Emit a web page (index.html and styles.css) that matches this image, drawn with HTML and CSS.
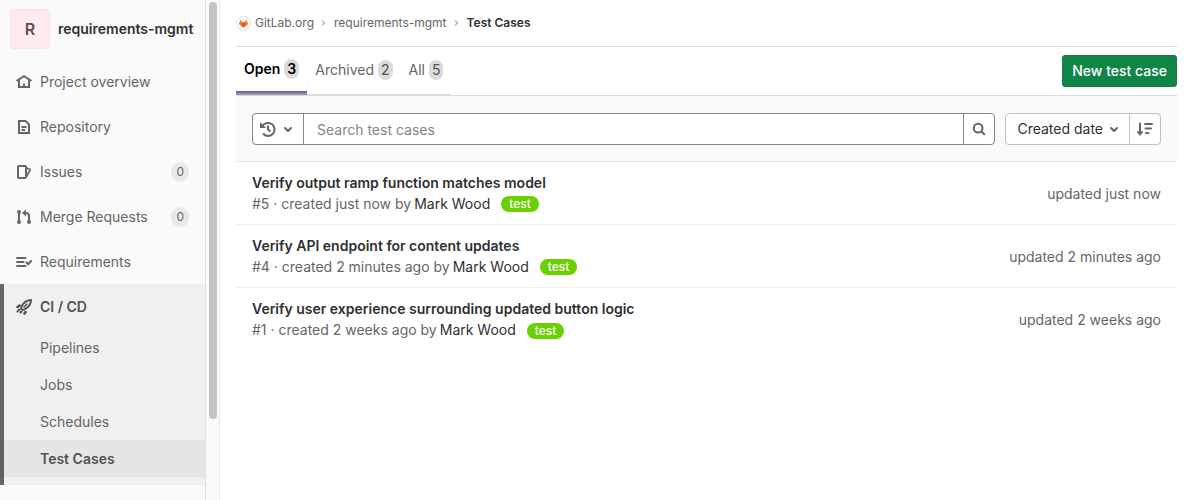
FILE: index.html
```html
<!DOCTYPE html>
<html lang="en">
<head>
<meta charset="utf-8">
<title>Test Cases · requirements-mgmt</title>
<link rel="stylesheet" href="styles.css">
</head>
<body>
<div class="page">
  <aside class="sidebar">
    <nav class="nav" aria-label="Project">
      <a class="project" href="#"><span class="avatar">R</span><span>requirements-mgmt</span></a>
      <a class="nav-item" href="#">
        <svg class="icon" viewBox="0 0 16 16" fill="none" stroke="currentColor" stroke-width="2"><path d="M.5 7 8 2.200l7.500 4.800M3 6V13h10V6M8 13V9.500"/></svg>
        <span>Project overview</span></a>
      <a class="nav-item" href="#">
        <svg class="icon" viewBox="0 0 16 16" fill="none" stroke="currentColor" stroke-width="2"><path d="M3 2h6.500L13 5.500V14H3zM5.500 8h5M5.500 11h3.500"/></svg>
        <span>Repository</span></a>
      <a class="nav-item" href="#">
        <svg class="icon" viewBox="0 0 16 16" fill="none" stroke="currentColor" stroke-width="2" stroke-linejoin="round"><rect x="2" y="2" width="8" height="12" rx="1"/><path stroke-width="1.800" d="M10.500 4l3.300 1.300c.3.200.3.500.2.800L10.500 12.500"/></svg>
        <span>Issues</span><span class="count">0</span></a>
      <a class="nav-item" href="#">
        <svg class="icon" viewBox="0 0 16 16" fill="none" stroke="currentColor" stroke-width="2"><path d="M3 3v10M13 13V7c0-2-1-3-3.500-3"/><g fill="currentColor" stroke="none"><circle cx="3" cy="3" r="2"/><circle cx="3" cy="13" r="2"/><circle cx="13" cy="13" r="2"/><path d="M6 4 10 .5v7z"/></g></svg>
        <span>Merge Requests</span><span class="count">0</span></a>
      <a class="nav-item" href="#">
        <svg class="icon" viewBox="0 0 16 16" fill="none" stroke="currentColor" stroke-width="2" stroke-linecap="round"><path d="M1 4h8.500M1 8h6.500M1 12h8.500"/><path d="M10.500 8.500l1.700 1.700L15 7"/></svg>
        <span>Requirements</span></a>
      <div class="section">
        <a class="nav-item strong" href="#">
          <svg class="icon" viewBox="0 0 16 16" fill="none" stroke="currentColor" stroke-width="2" stroke-linejoin="round" stroke-linecap="round"><path d="M15 1c-4 0-7 2-9.500 6.500-.6 1.200-.5 2.200.1 2.800s1.700.6 2.900 0C13 8 15 5 15 1z"/><path d="M11 5 8 8" stroke-width="1.400"/><path stroke-width="2.600" d="M3.500 6.500 1.500 8M9.500 13l-1 1.500"/><path stroke-width="2" d="M3.500 10.500 1.500 12.500M5.500 12.500l-1 1"/></svg>
          <span>CI / CD</span></a>
        <a class="sub-item" href="#">Pipelines</a>
        <a class="sub-item" href="#">Jobs</a>
        <a class="sub-item" href="#">Schedules</a>
        <a class="sub-item current" href="#" aria-current="page">Test Cases</a>
      </div>
    </nav>
    <div class="track"><div class="thumb"></div></div>
  </aside>
  <main class="main">
    <nav class="crumbs" aria-label="Breadcrumb">
      <a class="group" href="#"><span class="logo"><svg width="9" height="9" viewBox="0 0 24 24"><path fill="#fc6d26" d="M12 23 .8 14.500 0 12 4.500 1l3.300 8.500h8.400L19.500 1 24 12l-.8 2.500z"/><path fill="#e24329" d="M12 23 7.800 9.500h8.400z"/></svg></span>GitLab.org</a>
      <svg class="sep" viewBox="0 0 8 8" fill="none" stroke="currentColor"><path d="M2 1.500 4.500 4 2 6.500"/></svg>
      <a href="#">requirements-mgmt</a>
      <svg class="sep" viewBox="0 0 8 8" fill="none" stroke="currentColor"><path d="M2 1.500 4.500 4 2 6.500"/></svg>
      <a class="here" href="#">Test Cases</a>
    </nav>
    <div class="top">
      <div class="tabs" role="tablist">
        <button class="tab active" role="tab" aria-selected="true">Open <span class="badge">3</span></button>
        <button class="tab" role="tab" aria-selected="false">Archived <span class="badge">2</span></button>
        <button class="tab" role="tab" aria-selected="false">All <span class="badge">5</span></button>
      </div>
      <button class="primary">New test case</button>
    </div>
    <div class="filters">
      <form class="search">
        <button class="history" type="button" aria-label="Recent searches">
          <svg class="icon" viewBox="0 0 16 16" fill="none" stroke="currentColor" stroke-width="2"><path d="M2.500 5A6.500 6.500 0 1 1 3 12.500M8 4.500V8.500l2.500 2"/><path fill="currentColor" stroke="none" d="M0 1v6h6L4 5 2 3z"/></svg>
          <svg class="chevron" viewBox="0 0 16 16" fill="none" stroke="currentColor" stroke-width="2" stroke-linecap="round" stroke-linejoin="round"><path d="M5 7l3 3 3-3"/></svg>
        </button>
        <input class="query" type="text" placeholder="Search test cases" aria-label="Search test cases">
        <button class="go" type="button" aria-label="Search"><svg class="glyph" viewBox="0 0 16 16" fill="none" stroke="currentColor" stroke-width="2.400" stroke-linecap="round"><circle cx="7" cy="7" r="5"/><path d="M11 11l3 3"/></svg></button>
      </form>
      <div class="sort">
        <button class="sort-by">Created date <svg class="chevron" viewBox="0 0 16 16" fill="none" stroke="currentColor" stroke-width="2" stroke-linecap="round" stroke-linejoin="round"><path d="M5 7l3 3 3-3"/></svg></button>
        <button class="direction" aria-label="Sort direction"><svg class="icon" viewBox="0 0 16 16" fill="none" stroke="currentColor" stroke-width="2" stroke-linecap="round" stroke-linejoin="round"><path d="M3 2.500v11M1 11l2 2.500L5 11M8 3h7M8.500 7.500H14M9 12h2.500"/></svg></button>
      </div>
    </div>
    <ul class="cases">
      <li class="case">
        <div><a class="title" href="#">Verify output ramp function matches model</a>
        <div class="meta">#5 · created just now by <a href="#">Mark Wood</a><a class="label" href="#">test</a></div></div>
        <span class="updated">updated just now</span>
      </li>
      <li class="case">
        <div><a class="title" href="#">Verify API endpoint for content updates</a>
        <div class="meta">#4 · created 2 minutes ago by <a href="#">Mark Wood</a><a class="label" href="#">test</a></div></div>
        <span class="updated">updated 2 minutes ago</span>
      </li>
      <li class="case">
        <div><a class="title" href="#">Verify user experience surrounding updated button logic</a>
        <div class="meta">#1 · created 2 weeks ago by <a href="#">Mark Wood</a><a class="label" href="#">test</a></div></div>
        <span class="updated">updated 2 weeks ago</span>
      </li>
    </ul>
  </main>
</div>
</body>
</html>
```
FILE: styles.css
```css
* { box-sizing: border-box; }
body { margin: 0; font: 14px/20px Inter, "Liberation Sans", sans-serif; color: #303030; background: #fff; }
a { color: inherit; text-decoration: none; }
button, input { font: inherit; color: inherit; margin: 0; padding: 0; border: 0; background: none; }
svg { display: block; flex: none; }
.icon { width: 16px; height: 16px; color: #666; }
.chevron { width: 16px; height: 16px; color: #666; }
.glyph { width: 14px; height: 14px; color: #666; }

.page { display: flex; min-height: 100vh; }
.sidebar { display: flex; flex: none; width: 220px; background: #fafafa; border-right: 1px solid #eaeaea; }
.nav { flex: 1; border-right: 1px solid #e1e1e1; }
.track { width: 13px; padding: 2px 2px 0 3px; }
.thumb { height: 417px; border-radius: 4px; background: #c4c4c4; }
.project { display: flex; align-items: center; gap: 8px; padding: 9px 0 10px 10px; font-weight: 600; }
.avatar { display: grid; place-items: center; width: 40px; height: 40px; border: 1px solid #f7e6e8; border-radius: 3px; background: #ffebee; color: #555; font-size: 16px; }
.nav-item { display: flex; align-items: center; gap: 8px; height: 45px; padding: 0 16px; color: #666; }
.count { margin-left: auto; padding: 0 5px; border-radius: 10px; background: #e9e9e9; font-size: 12px; }
.section { padding-bottom: 8px; background: #f0f0f0; box-shadow: inset 4px 0 #666; }
.strong { color: #525252; font-weight: 600; }
.strong .icon { color: #525252; }
.sub-item { display: block; padding: 9px 0 8px 40px; color: #666; }
.current { background: rgba(0, 0, 0, .04); color: #525252; font-weight: 600; }

.main { flex: 1; min-width: 0; padding: 0 13px 0 16px; }
.crumbs { display: flex; align-items: center; height: 47px; gap: 6px; border-bottom: 1px solid #dbdbdb; font-size: 12px; color: #666; }
.group { display: flex; align-items: center; gap: 4px; }
.logo { display: grid; place-items: center; width: 15px; height: 15px; border: 1px solid #e1e1e1; border-radius: 50%; }
.sep { width: 8px; height: 8px; color: #777; }
.here { color: #303030; font-weight: 600; }
.top { display: flex; align-items: center; justify-content: space-between; height: 49px; border-bottom: 1px solid #dbdbdb; }
.tabs { display: flex; align-self: stretch; border-bottom: 1px solid #dbdbdb; }
.tab { display: flex; align-items: center; gap: 4px; padding: 0 8px 2px; color: #666; }
.tab.active { margin-bottom: -1px; border-bottom: 2px solid #999; box-shadow: inset 0 -2px #6666c4; color: #000; font-weight: 600; }
.badge { padding: 0 3px; border-radius: 8px; background: #dbdbdb; color: #525252; }
.active .badge { color: #000; }
.primary { height: 32px; padding: 0 10px; border-radius: 4px; background: #108548; box-shadow: inset 0 0 0 1px #217645; color: #fff; font-weight: 500; }
.filters { display: flex; gap: 10px; padding: 17px 16px 16px; border-bottom: 1px solid #e5e5e5; background: #fafafa; }
.search { display: flex; flex: 1; height: 32px; border: 1px solid #868686; border-radius: 4px; background: #fff; }
.history { display: flex; align-items: center; justify-content: center; gap: 4px; width: 51px; border-right: 1px solid #868686; }
.query { flex: 1; min-width: 0; padding: 1px 13px 0; outline: 0; }
.query::placeholder { color: #868686; opacity: 1; }
.go { display: grid; place-items: center; width: 31px; border-left: 1px solid #868686; }
.sort { display: flex; height: 32px; border: 1px solid #bfbfbf; border-radius: 4px; background: #fff; }
.sort-by { display: flex; align-items: center; gap: 3px; padding: 0 7px 0 11px; }
.direction { display: grid; place-items: center; width: 31px; border-left: 1px solid #bfbfbf; }
.cases { margin: 0; padding: 0; list-style: none; }
.case { display: flex; align-items: center; justify-content: space-between; height: 63px; padding: 0 16px; border-bottom: 1px solid #eee; }
.case:last-child { border: 0; }
.title { font-weight: 600; }
.meta { display: flex; align-items: center; gap: 3px; margin-top: 1px; color: #666; }
.meta a { color: #303030; }
.meta .label { margin: 1px 0 0 8px; padding: 0 8px; border-radius: 8px; background: #69d100; color: #fff; font-size: 12px; line-height: 16px; font-weight: 500; }
.updated { padding-top: 1px; color: #666; }
```
